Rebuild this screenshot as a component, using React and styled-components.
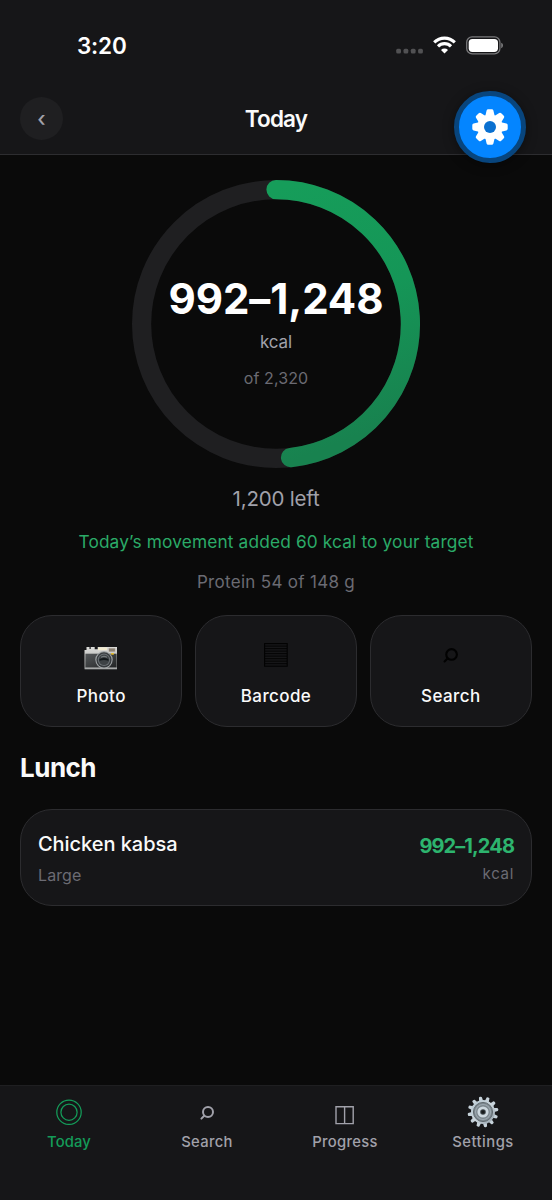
import React from 'react'
import styled, { createGlobalStyle } from 'styled-components'

const GlobalStyle = createGlobalStyle`
    * {
        box-sizing: border-box;
    }
    body {
        margin: 0;
        background-color: #0a0a0a;
        font-family: Inter, "Liberation Sans", sans-serif;
    }
`

const Phone = styled.div`
    width: 552px;
    height: 1200px;
    display: flex;
    flex-direction: column;
    position: relative;
    overflow: hidden;
    background-color: #0a0a0a;
    color: #fafafa;
`

const Top = styled.header`
    height: 155px;
    background-color: #161618;
    border-bottom: 1px solid #2d2d30;
`

const StatusBar = styled.div`
    height: 90px;
    padding: 0 48px 0 77px;
    display: flex;
    align-items: center;
    justify-content: space-between;
`

const Time = styled.span`
    font-size: 22.5px;
    font-weight: 600;
    letter-spacing: -0.2px;
    color: #ffffff;
`

const StatusIcons = styled.div`
    display: flex;
    align-items: center;
`

const TitleRow = styled.div`
    height: 57px;
    padding: 0 20px;
    display: grid;
    grid-template-columns: 43px 1fr 43px;
    align-items: center;
`

const BackButton = styled.button`
    width: 43px;
    height: 43px;
    padding: 0;
    border: none;
    border-radius: 50%;
    background-color: #1f1f21;
    color: #a1a1aa;
    font-family: inherit;
    font-size: 21px;
    font-weight: 500;
    line-height: 43px;
`

const Title = styled.h1`
    margin: 0;
    text-align: center;
    font-size: 22.5px;
    font-weight: 600;
    letter-spacing: -0.8px;
`

const FloatingButton = styled.button`
    position: absolute;
    left: 454px;
    top: 91px;
    width: 71.5px;
    height: 71.5px;
    padding: 0;
    display: flex;
    align-items: center;
    justify-content: center;
    border: 5.5px solid #08457d;
    border-radius: 50%;
    background-color: #0485ff;
    box-shadow: 0 2px 12px rgba(0, 0, 0, 0.4);
`

const Main = styled.main`
    flex: 1;
    padding: 24.5px 20px 0;
    display: flex;
    flex-direction: column;
`

const Ring = styled.div`
    width: 288px;
    height: 288px;
    margin: 0 auto 11px;
    display: grid;
    > * {
        grid-area: 1 / 1;
    }
`

const RingText = styled.div`
    padding-top: 94px;
    display: flex;
    flex-direction: column;
    align-items: center;
`

const Line = styled.div`
    height: ${(p) => p.$h || 40}px;
    line-height: ${(p) => p.$h || 40}px;
    font-size: ${(p) => p.$size}px;
    font-weight: ${(p) => p.$weight || 400};
    letter-spacing: ${(p) => p.$track || 0}px;
    color: ${(p) => p.$color || '#fafafa'};
    text-align: ${(p) => p.$align || 'center'};
    white-space: nowrap;
`

const Movement = styled(Line)`
    margin-top: 3px;
`

const Actions = styled.div`
    margin-top: 13.5px;
    display: grid;
    grid-template-columns: repeat(3, 1fr);
    gap: 12.5px;
`

const Action = styled.button`
    height: 112px;
    padding: 23px 0 0;
    display: flex;
    flex-direction: column;
    align-items: center;
    background-color: #161618;
    border: 1px solid #2c2c2f;
    border-radius: 32px;
    font-family: inherit;
`

const ActionIcon = styled.span`
    height: 37px;
    display: flex;
    align-items: center;
`

const SectionTitle = styled.h2`
    margin: 20.5px 0 21.4px;
    line-height: 40px;
    font-size: 26px;
    font-weight: 700;
    letter-spacing: -0.5px;
`

const Meal = styled.div`
    height: 97px;
    padding: 18px 17px 0;
    display: flex;
    justify-content: space-between;
    background-color: #161618;
    border: 1px solid #2c2c2f;
    border-radius: 32px;
`

const MealInfo = styled.div`
    padding-top: ${(p) => p.$top || 0}px;
`

const TabBar = styled.nav`
    height: 115px;
    display: grid;
    grid-template-columns: repeat(4, 1fr);
    background-color: #161618;
    border-top: 1px solid #1f1f21;
`

const Tab = styled.div`
    padding-top: 8px;
    display: flex;
    flex-direction: column;
    align-items: center;
    color: ${(p) => (p.$active ? '#149c59' : '#a1a1aa')};
    font-size: 14.8px;
    font-weight: 500;
    letter-spacing: ${(p) => p.$track}px;
    line-height: 20px;
`

const TabIcon = styled.span`
    height: 37.5px;
`

const CellDots = () => (
    <svg width="28" height="20" viewBox="0 0 28 20" fill="#515153">
        {[0, 7.3, 14.6, 21.9].map((x) => (
            <rect key={x} x={x + 0.2} y="13.8" width="4.8" height="4.6" rx="1.5" />
        ))}
    </svg>
)

const Wifi = () => (
    <svg width="23" height="18" viewBox="0 0 23 18" style={{ marginLeft: 9 }}>
        <g fill="none" stroke="#fff" strokeWidth="3.1">
            <path d="M1.2 6.4a14.6 14.6 0 0 1 20.6 0" />
            <path d="M5 10.3a9.2 9.2 0 0 1 13 0" />
        </g>
        <path d="M11.5 17.4 8 13.9a5 5 0 0 1 7 0z" fill="#fff" />
    </svg>
)

const Battery = () => (
    <svg width="38" height="19" viewBox="0 0 38 19" style={{ marginLeft: 10 }}>
        <rect x="0.7" y="0.9" width="33.2" height="17" rx="5.4" fill="none" stroke="#79797b" strokeWidth="1.3" />
        <rect x="2.7" y="2.9" width="29.3" height="13" rx="3.7" fill="#fff" />
        <path d="M35.2 6.8c2.4.8 2.4 4.6 0 5.4z" fill="#79797b" />
    </svg>
)

const Cog = () => (
    <svg width="38" height="38" viewBox="-19 -19 38 38">
        <g fill="#fff">
            {[0, 45, 90, 135, 180, 225, 270, 315].map((a) => (
                <path
                    key={a}
                    transform={`rotate(${a})`}
                    d="M-4.7-11-3.4-16.4Q-3.1-17.7-1.8-17.7H1.8Q3.1-17.7 3.4-16.4L4.7-11z"
                />
            ))}
            <circle r="12.6" />
        </g>
        <circle r="6" fill="#0a70d0" />
    </svg>
)

const ProgressRing = ({ value }) => {
    const r = 134.4
    const angle = value * 2 * Math.PI
    const x = 144 + r * Math.sin(angle)
    const y = 144 - r * Math.cos(angle)
    return (
        <svg width="288" height="288" viewBox="0 0 288 288" fill="none" strokeWidth="19.2">
            <defs>
                <linearGradient id="ring" x1="0" y1="0" x2="0.2" y2="1">
                    <stop offset="0" stopColor="#169d5a" />
                    <stop offset="0.5" stopColor="#159657" />
                    <stop offset="1" stopColor="#18824f" />
                </linearGradient>
            </defs>
            <circle cx="144" cy="144" r={r} stroke="#1f1f21" />
            <path
                d={`M144 ${144 - r}A${r} ${r} 0 ${value > 0.5 ? 1 : 0} 1 ${x} ${y}`}
                stroke="url(#ring)"
                strokeLinecap="round"
            />
        </svg>
    )
}

const Camera = () => (
    <svg width="34" height="24" viewBox="0 0 34 24">
        <defs>
            <linearGradient id="chrome" x1="0" y1="0" x2="0" y2="1">
                <stop offset="0" stopColor="#dededb" />
                <stop offset="1" stopColor="#9b9d9d" />
            </linearGradient>
            <linearGradient id="leather" x1="0" y1="0" x2="1" y2="1">
                <stop offset="0" stopColor="#55585a" />
                <stop offset="1" stopColor="#222425" />
            </linearGradient>
        </defs>
        <path d="M2.5 1h3v2h1.2V1h4v2.2h3V1H33v22.2H.5V4h2z" fill="url(#chrome)" />
        <path d="M1.4 7.7h31.2v13.8H1.4z" fill="url(#leather)" />
        <path d="M1 21.8h32v1.3H1z" fill="#a6a8a8" />
        <path d="M14 1.4h9v2.8h-9z" fill="#f2ebd0" />
        <path d="M24.4 2h7v4h-7z" fill="#8b8072" stroke="#d0cec9" strokeWidth=".8" />
        <path d="M27.2 7h2.6v1.7h-2.6z" fill="#e8bd28" />
        <circle cx="20" cy="13.8" r="8.7" fill="#a2a6a8" />
        <circle cx="20" cy="13.8" r="7.6" fill="#373b3e" />
        <circle cx="20" cy="13.8" r="6.2" fill="#6b7175" />
        <circle cx="20" cy="13.8" r="5.2" fill="#3d4245" />
        <path d="M15.5 13.2q4.5-2.5 9 0v1.5q-4.5-1.2-9 0z" fill="#12181b" />
        <path d="M17 11.2q3-2 6 0" fill="none" stroke="#858b8e" strokeWidth=".9" />
    </svg>
)

const Barcode = () => (
    <svg width="24" height="24" viewBox="0 0 24 24" fill="none" stroke="#020202" style={{ marginBottom: 6 }}>
        <rect x="0.6" y="0.6" width="22.6" height="22.6" strokeWidth="1.1" />
        {[1, 2, 3, 4, 5, 6, 7, 8].map((i) => (
            <path key={i} d={`M1 ${0.6 + i * 2.51}h22`} strokeWidth="0.9" />
        ))}
    </svg>
)

const Magnifier = ({ size, color, drop }) => (
    <svg
        width={size}
        height={size}
        viewBox="0 0 16 16"
        fill="none"
        stroke={color}
        strokeWidth="2"
        strokeLinecap="round"
        style={{ marginTop: drop, display: 'block' }}
    >
        <circle cx="9" cy="7" r="5" />
        <path d="M5.2 10.8 2.4 13.6" />
    </svg>
)

const Circles = () => (
    <svg width="26" height="26" viewBox="0 0 26 26" fill="none" stroke="currentColor" strokeWidth="1.25" style={{ marginTop: 5, display: 'block' }}>
        <circle cx="13" cy="13.2" r="12.2" />
        <circle cx="13" cy="13.2" r="8.1" />
    </svg>
)

const Columns = () => (
    <svg width="20" height="20" viewBox="0 0 20 20" fill="none" stroke="currentColor" strokeWidth="1.4" style={{ marginTop: 11, display: 'block' }}>
        <path d="M1 1.8h17.2v16.8H1zM9.6 1.8v16.8" />
    </svg>
)

const Gear = () => (
    <svg width="32" height="32" viewBox="-16 -16 32 32" style={{ marginTop: 2, display: 'block' }}>
        <defs>
            <linearGradient id="steel" x1="0" y1="0" x2="1" y2="1">
                <stop offset="0" stopColor="#b3c5d0" />
                <stop offset="0.5" stopColor="#ccd6dd" />
                <stop offset="1" stopColor="#8d9ba5" />
            </linearGradient>
        </defs>
        {[...Array(12)].map((_, i) => (
            <path
                key={i}
                transform={`rotate(${i * 30 - 10})`}
                d="M-2-11-1.5-14.8Q-1.2-15.4 0-15.4T1.5-14.8L2-11z"
                fill="#c6d2da"
            />
        ))}
        <circle r="12" fill="url(#steel)" />
        <circle r="9.6" fill="#7b868d" stroke="#5b656b" strokeWidth=".9" />
        <circle r="7.5" fill="none" stroke="#9ba7af" strokeWidth="1.2" />
        <circle r="4.2" fill="#3c4347" stroke="#ccd7de" strokeWidth="2.8" />
        <circle r="1.8" fill="#171a1c" />
    </svg>
)

const actions = [
    { label: 'Photo', icon: <Camera /> },
    { label: 'Barcode', icon: <Barcode /> },
    { label: 'Search', icon: <Magnifier size={17} color="#020202" drop={-5} /> },
]

const tabs = [
    { label: 'Today', icon: <Circles />, active: true, track: 0.1 },
    { label: 'Search', icon: <Magnifier size={16} color="currentColor" drop={11} />, track: 0.3 },
    { label: 'Progress', icon: <Columns />, track: 0.3 },
    { label: 'Settings', icon: <Gear />, track: 0.5 },
]

export default function App() {
    return (
        <Phone>
            <GlobalStyle />
            <Top>
                <StatusBar>
                    <Time>3:20</Time>
                    <StatusIcons>
                        <CellDots />
                        <Wifi />
                        <Battery />
                    </StatusIcons>
                </StatusBar>
                <TitleRow>
                    <BackButton>‹</BackButton>
                    <Title>Today</Title>
                </TitleRow>
            </Top>
            <FloatingButton>
                <Cog />
            </FloatingButton>

            <Main>
                <Ring>
                    <ProgressRing value={1120 / 2320} />
                    <RingText>
                        <Line $h={50} $size={42} $weight={700} $track={-0.1} $color="#fff">992–1,248</Line>
                        <Line $h={37} $size={17} $track={-0.1} $color="#a1a1aa">kcal</Line>
                        <Line $h={34} $size={16} $track={0.1} $color="#6b6b73">of 2,320</Line>
                    </RingText>
                </Ring>
                <Line $size={20.5} $track={-0.2} $color="#a1a1aa">1,200 left</Line>
                <Movement $size={17.3} $track={0.15} $color="#2bab68">Today’s movement added 60 kcal to your target</Movement>
                <Line $size={17} $track={0.3} $color="#6b6b73">Protein 54 of 148 g</Line>

                <Actions>
                    {actions.map((a) => (
                        <Action key={a.label}>
                            <ActionIcon>{a.icon}</ActionIcon>
                            <Line $size={17} $weight={500} $track={0.4}>{a.label}</Line>
                        </Action>
                    ))}
                </Actions>

                <SectionTitle>Lunch</SectionTitle>
                <Meal>
                    <MealInfo>
                        <Line $h={32} $size={20} $weight={500} $track={-0.05} $align="left">Chicken kabsa</Line>
                        <Line $h={31} $size={16} $track={0.1} $color="#6b6b73" $align="left">Large</Line>
                    </MealInfo>
                    <MealInfo $top={3}>
                        <Line $h={30} $size={20} $weight={700} $track={-0.9} $color="#2db46e" $align="right">992–1,248</Line>
                        <Line $h={26} $size={15} $track={0.7} $color="#6b6b73" $align="right">kcal</Line>
                    </MealInfo>
                </Meal>
            </Main>

            <TabBar>
                {tabs.map((t) => (
                    <Tab key={t.label} $active={t.active} $track={t.track}>
                        <TabIcon>{t.icon}</TabIcon>
                        {t.label}
                    </Tab>
                ))}
            </TabBar>
        </Phone>
    )
}
